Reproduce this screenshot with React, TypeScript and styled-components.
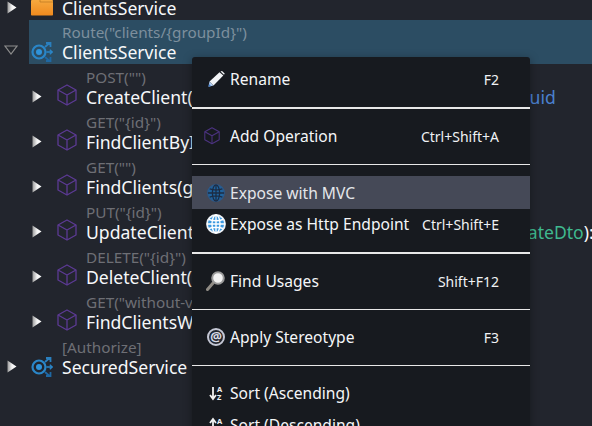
import React from "react";
import styled, { createGlobalStyle } from "styled-components";

const Global = createGlobalStyle`
  html, body { margin: 0; padding: 0; background: #22252d; }
  #root { width: 592px; height: 426px; overflow: hidden; }
`;

const Page = styled.div`
  position: relative;
  width: 592px;
  height: 426px;
  overflow: hidden;
  background: #22252d;
  font-family: "Noto Sans", "Open Sans", sans-serif;
  color: #f4f6f8;
`;

const Tree = styled.div`
  display: flex;
  flex-direction: column;
  margin-top: -4px;
`;

const Row = styled.div<{ $depth: number; $plain?: boolean; $selected?: boolean }>`
  display: flex;
  align-items: stretch;
  height: ${(p) => (p.$plain ? 24 : p.$selected ? 44 : 45)}px;
  padding-left: ${(p) => p.$depth * 25}px;
`;

const Toggle = styled.div`
  flex: 0 0 29px;
  display: flex;
  align-items: flex-end;
  padding: 0 0 6px 7px;
  box-sizing: border-box;
`;

const Body = styled.div<{ $selected?: boolean }>`
  flex: 1;
  display: flex;
  align-items: flex-end;
  min-width: 0;
  background: ${(p) => (p.$selected ? "#2c4d63" : "transparent")};
`;

const Slot = styled.div<{ $depth: number }>`
  flex: 0 0 ${(p) => (p.$depth ? 29 : 33)}px;
  height: ${(p) => (p.$depth ? 28 : 24)}px;
  margin-left: ${(p) => (p.$depth ? 3 : 0)}px;
  padding-left: ${(p) => (p.$depth ? 0 : 2)}px;
  box-sizing: border-box;
  display: flex;
  align-items: center;
`;

const Labels = styled.div`
  display: flex;
  flex-direction: column;
  white-space: nowrap;
  min-width: 0;
`;

const Note = styled.div<{ $selected?: boolean }>`
  font-size: 15.3px;
  line-height: 25px;
  height: 20px;
  color: ${(p) => (p.$selected ? "#7d8f9d" : "#6e6f75")};
`;

const Name = styled.div`
  font-size: 17.6px;
  line-height: 24px;
  height: 24px;
  color: #f6f8fa;
`;

const Tail = styled.span<{ $gap: number; $tone: string }>`
  margin-left: ${(p) => p.$gap}px;
  color: ${(p) => p.$tone};
`;

const Menu = styled.div`
  position: absolute;
  left: 192px;
  top: 57px;
  width: 338px;
  padding: 6px 0;
  background: #171a1f;
  border-radius: 3px;
  box-shadow: 0 2px 10px rgba(0, 0, 0, 0.35);
  font-size: 15.6px;
`;

const Item = styled.div<{ $hover?: boolean; $height?: number; $lift?: number }>`
  display: flex;
  align-items: center;
  box-sizing: border-box;
  height: ${(p) => p.$height ?? 32}px;
  padding: 0 31px ${(p) => p.$lift ?? 0}px 12px;
  background: ${(p) => (p.$hover ? "#454957" : "transparent")};
  color: ${(p) => (p.$hover ? "#e4e6ea" : "#f4f6f8")};
  white-space: nowrap;
`;

const ItemIcon = styled.div`
  flex: 0 0 26px;
  height: 24px;
  display: flex;
  align-items: center;
`;

const ItemLabel = styled.span`
  flex: 1;
`;

const Shortcut = styled.span`
  font-size: 14px;
  color: #f0f2f4;
`;

const Divider = styled.div<{ $thick?: boolean }>`
  height: ${(p) => (p.$thick ? 2 : 1)}px;
  margin: 12px 0 11px;
  background: #e8e8e8;
`;

const AtBadge = styled.div`
  width: 18px;
  height: 18px;
  margin-left: 3px;
  box-sizing: border-box;
  border: 2px solid #c4c7d4;
  border-radius: 50%;
  background: #23262e;
  color: #d8dbe6;
  font-size: 13px;
  font-weight: 700;
  line-height: 13px;
  text-align: center;
`;

const Closed = () => (
  <svg width="10" height="13" viewBox="0 0 10 13">
    <defs>
      <linearGradient id="tri" x1="0" x2="1" y1="0" y2="0">
        <stop offset="0" stopColor="#9a9a9a" />
        <stop offset="0.5" stopColor="#f4f4f4" />
        <stop offset="1" stopColor="#ffffff" />
      </linearGradient>
    </defs>
    <path d="M0.5 0.5 L9.5 6.5 L0.5 12.5 Z" fill="url(#tri)" />
  </svg>
);

const Open = () => (
  <svg width="14" height="10" viewBox="0 0 14 10" style={{ margin: "0 0 3px -3px" }}>
    <path d="M1 1 H13 L7 9 Z" fill="#23262c" stroke="#8d8d8d" strokeWidth="1.2" />
  </svg>
);

const Cube = ({ size = 20, tone = "#5c3a94" }: { size?: number; tone?: string }) => (
  <svg width={size} height={size * 1.1} viewBox="0 0 20 22" fill="none" stroke={tone} strokeWidth="1.3" strokeLinejoin="round">
    <path d="M10 1 L19 6 V16 L10 21 L1 16 V6 Z" />
    <path d="M1 6 L10 11 L19 6 M10 11 V21" />
  </svg>
);

const Service = () => (
  <svg width="22" height="20" viewBox="0 0 22 20" fill="none">
    <circle cx="8" cy="10" r="6.5" stroke="#2a86c8" strokeWidth="2.2" />
    <circle cx="8" cy="10" r="3" fill="#2f93da" />
    <path d="M14 5 L18.5 1 M15 1 H19.5 V5" stroke="#2a7fbe" strokeWidth="1.8" />
    <path d="M15.5 10 H21 M18.8 7.8 L21.4 10 L18.8 12.2" stroke="#2a86c8" strokeWidth="1.3" />
    <path d="M14 15 L18.5 19 M15 19 H19.5 V15" stroke="#1f68a3" strokeWidth="1.8" />
  </svg>
);

const Folder = () => (
  <svg width="22" height="16" viewBox="0 0 22 16">
    <defs>
      <linearGradient id="fold" x1="0" x2="0" y1="0" y2="1">
        <stop offset="0" stopColor="#f6a93f" />
        <stop offset="1" stopColor="#f08a1e" />
      </linearGradient>
    </defs>
    <rect x="0" y="0" width="22" height="15.5" rx="0.8" fill="url(#fold)" />
    <path d="M9 0 V2 H22" stroke="#b97520" strokeWidth="0.7" fill="none" />
  </svg>
);

const Pencil = () => (
  <svg width="17" height="16" viewBox="0 0 17 16" style={{ marginLeft: 4 }}>
    <path d="M1.5 10.5 L11.5 1.2 L15.3 4.6 L5.5 14.5 Z" fill="#f2f4f6" />
    <path d="M12.5 0.5 L14 0 L16.7 2.5 L16 3.8 Z" fill="#f2f4f6" />
    <path d="M1.5 10.5 L5.5 14.5 L0.5 15.7 Z" fill="#b4cef0" />
    <path d="M0.5 15.7 L1 13 L3 15 Z" fill="#3f7fd0" />
  </svg>
);

const Globe = ({ dim }: { dim?: boolean }) => {
  const fill = dim ? "#1f649f" : "#3a98e0";
  const line = dim ? "#1c2c44" : "#ffffff";
  const rim = dim ? "#2a5a8c" : "#eef3f8";
  const s = dim ? 18 : 20;
  return (
    <svg width={s} height={s} viewBox="0 0 20 20" fill="none" style={{ marginLeft: dim ? 3 : 2 }}>
      <circle cx="10" cy="10" r="9" fill={fill} stroke={rim} strokeWidth="1.8" />
      <ellipse cx="10" cy="10" rx="4" ry="9" stroke={line} strokeWidth="1.4" />
      <path d="M10 1 V19 M3 5.5 Q10 8 17 5.5 M1 10 H19 M3 14.5 Q10 12 17 14.5" stroke={line} strokeWidth="1.4" />
    </svg>
  );
};

const Lens = () => (
  <svg width="20" height="20" viewBox="0 0 20 20" fill="none" style={{ marginLeft: 2 }}>
    <path d="M1.5 18.5 L7.5 11.5" stroke="#8f8b84" strokeWidth="3" strokeLinecap="round" />
    <circle cx="12" cy="7" r="5.8" fill="#f2f2f2" stroke="#9a9a9a" strokeWidth="2" />
  </svg>
);

const Sort = ({ up }: { up?: boolean }) => (
  <svg width="16" height="16" viewBox="0 0 16 16" fill="none" style={{ marginLeft: 5 }}>
    <path d={up ? "M4 14 V3 M1 6 L4 2 L7 6" : "M4 2 V13 M1 10 L4 14 L7 10"} stroke="#f0f0f0" strokeWidth="1.8" />
    <text x="8" y="7" fontSize="7.5" fontWeight="700" fill="#f0f0f0" fontFamily="Noto Sans, sans-serif">A</text>
    <text x="8" y="15" fontSize="7.5" fontWeight="700" fill="#f0f0f0" fontFamily="Noto Sans, sans-serif">Z</text>
  </svg>
);

const operations = [
  { note: 'POST("")', name: "CreateClient(", tail: "Guid", gap: 324, tone: "#4a80d0" },
  { note: 'GET("{id}")', name: "FindClientById(" },
  { note: 'GET("")', name: "FindClients(groupId)" },
  { note: 'PUT("{id}")', name: "UpdateClient(", tail: "UpdateDto", gap: 294, tone: "#3fb98f", end: "):" },
  { note: 'DELETE("{id}")', name: "DeleteClient(" },
  { note: 'GET("without-v")', name: "FindClientsWithoutView(" },
];

export default function App() {
  return (
    <Page>
      <Global />
      <Tree>
        <Row $depth={0} $plain>
          <Toggle><Closed /></Toggle>
          <Body>
            <Slot $depth={0}><Folder /></Slot>
            <Labels><Name>ClientsService</Name></Labels>
          </Body>
        </Row>
        <Row $depth={0} $selected>
          <Toggle><Open /></Toggle>
          <Body $selected>
            <Slot $depth={0}><Service /></Slot>
            <Labels>
              <Note $selected>Route("clients/{"{"}groupId{"}"}")</Note>
              <Name>ClientsService</Name>
            </Labels>
          </Body>
        </Row>
        {operations.map((op) => (
          <Row $depth={1} key={op.name}>
            <Toggle><Closed /></Toggle>
            <Body>
              <Slot $depth={1}><Cube /></Slot>
              <Labels>
                <Note>{op.note}</Note>
                <Name>
                  {op.name}
                  {op.tail && <Tail $gap={op.gap!} $tone={op.tone!}>{op.tail}</Tail>}
                  {op.end}
                </Name>
              </Labels>
            </Body>
          </Row>
        ))}
        <Row $depth={0}>
          <Toggle><Closed /></Toggle>
          <Body>
            <Slot $depth={0}><Service /></Slot>
            <Labels>
              <Note>[Authorize]</Note>
              <Name>SecuredService</Name>
            </Labels>
          </Body>
        </Row>
      </Tree>
      <Menu>
        <Item><ItemIcon><Pencil /></ItemIcon><ItemLabel>Rename</ItemLabel><Shortcut>F2</Shortcut></Item>
        <Divider $thick />
        <Item><ItemIcon><Cube size={16} tone="#4c3380" /></ItemIcon><ItemLabel>Add Operation</ItemLabel><Shortcut>Ctrl+Shift+A</Shortcut></Item>
        <Divider />
        <Item $hover $height={33}><ItemIcon><Globe dim /></ItemIcon><ItemLabel>Expose with MVC</ItemLabel></Item>
        <Item $height={31} $lift={1}><ItemIcon><Globe /></ItemIcon><ItemLabel>Expose as Http Endpoint</ItemLabel><Shortcut>Ctrl+Shift+E</Shortcut></Item>
        <Divider $thick />
        <Item><ItemIcon><Lens /></ItemIcon><ItemLabel>Find Usages</ItemLabel><Shortcut>Shift+F12</Shortcut></Item>
        <Divider />
        <Item><ItemIcon><AtBadge>@</AtBadge></ItemIcon><ItemLabel>Apply Stereotype</ItemLabel><Shortcut>F3</Shortcut></Item>
        <Divider />
        <Item><ItemIcon><Sort /></ItemIcon><ItemLabel>Sort (Ascending)</ItemLabel></Item>
        <Item><ItemIcon><Sort up /></ItemIcon><ItemLabel>Sort (Descending)</ItemLabel></Item>
      </Menu>
    </Page>
  );
}
